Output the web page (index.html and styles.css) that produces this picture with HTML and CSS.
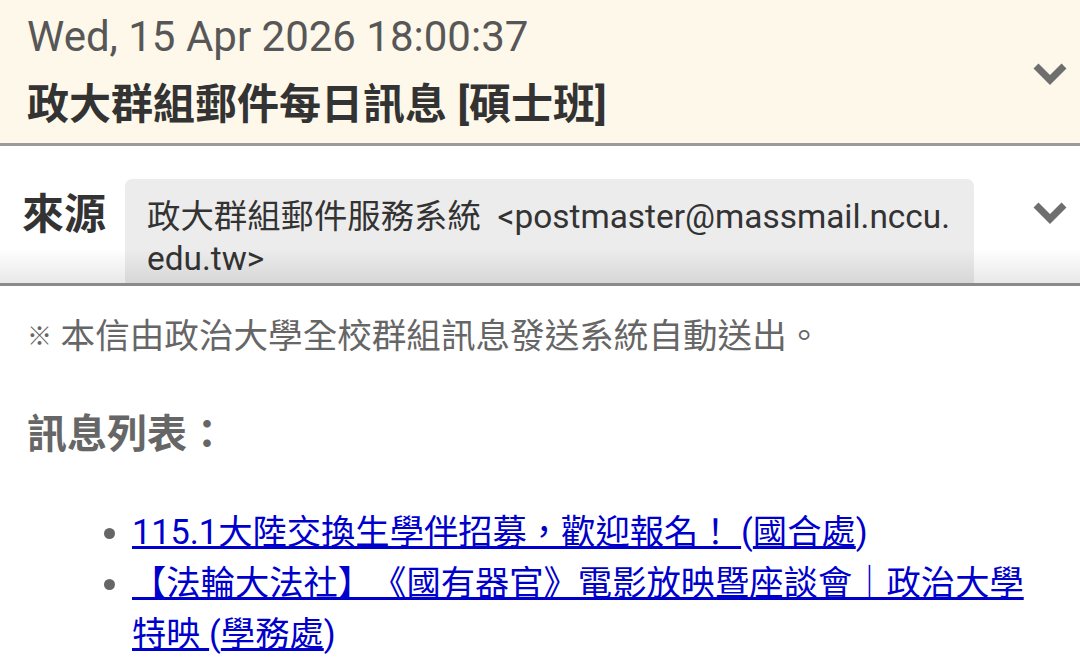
FILE: index.html
```html
<!DOCTYPE html>
<html lang="zh-Hant">
<head>
<meta charset="utf-8">
<title>政大群組郵件每日訊息</title>
<link rel="stylesheet" href="styles.css">
</head>
<body>
<header class="header">
  <div class="header-text">
    <div class="date">Wed, 15 Apr 2026 18:00:37</div>
    <div class="subject">政大群組郵件每日訊息 [碩士班]</div>
  </div>
  <svg class="chevron chevron-head" viewBox="0 0 34 23" width="34" height="23"><path d="M3 3 L17 17 L31 3" fill="none" stroke="#6e6e6e" stroke-width="7"/></svg>
</header>
<section class="from-row">
  <div class="from-label">來源</div>
  <div class="from-box">政大群組郵件服務系統&nbsp;&nbsp;&lt;postmaster@massmail.nccu.<wbr>edu.tw&gt;</div>
  <svg class="chevron chevron-from" viewBox="0 0 34 23" width="34" height="23"><path d="M3 3 L17 17 L31 3" fill="none" stroke="#6e6e6e" stroke-width="7"/></svg>
  <div class="fade"></div>
</section>
<main class="content">
  <p class="note"><span class="mark">※</span> 本信由政治大學全校群組訊息發送系統自動送出。</p>
  <h3 class="list-title">訊息列表：</h3>
  <ul class="msg-list">
    <li><a href="#">115.1大陸交換生學伴招募，歡迎報名！ </a><span class="dept">(<a href="#">國合處</a>)</span></li>
    <li><a href="#">【法輪大法社】《國有器官》電影放映暨座談會｜政治大學特映 </a><span class="dept">(<a href="#">學務處</a>)</span></li>
  </ul>
</main>
</body>
</html>
```
FILE: styles.css
```css
html, body {
  margin: 0;
  padding: 0;
  background: #ffffff;
}
body {
  font-family: Roboto, "Noto Sans CJK TC", sans-serif;
  color: #333333;
  width: 1080px;
  overflow: hidden;
  text-spacing-trim: space-all;
}
.header {
  background: #fef8ea;
  border-bottom: 3px solid #9b9b9b;
  height: 143px;
  display: flex;
  align-items: center;
  box-sizing: content-box;
}
.header-text {
  flex: 1;
  padding-left: 27px;
  align-self: flex-start;
}
.date {
  font-size: 42px;
  line-height: 50px;
  margin-top: 12px;
  color: #575757;
}
.subject {
  font-size: 42px;
  line-height: 56px;
  margin-top: 15px;
  font-weight: bold;
  color: #333333;
}
.chevron {
  flex: none;
  display: block;
}
.chevron-head {
  margin-right: 13px;
  margin-top: 6px;
}
.from-row {
  position: relative;
  display: flex;
  align-items: flex-start;
  padding-top: 33px;
  height: 104px;
  border-bottom: 3px solid #8a8a8a;
  overflow: hidden;
}
.from-label {
  width: 125px;
  box-sizing: border-box;
  padding-left: 22px;
  font-size: 42px;
  line-height: 50px;
  margin-top: 11px;
  font-weight: bold;
  color: #333333;
  flex: none;
}
.from-box {
  width: 849px;
  box-sizing: border-box;
  height: 108px;
  background: #ececec;
  border-radius: 7px;
  padding: 17px 12px 0 22px;
  font-size: 33.4px;
  line-height: 42px;
  color: #333333;
  flex: none;
}
.chevron-from {
  margin-left: 59px;
  margin-top: 23px;
}
.fade {
  position: absolute;
  left: 0;
  right: 0;
  bottom: 0;
  height: 34px;
  background: linear-gradient(to bottom, rgba(0,0,0,0), rgba(0,0,0,0.09));
  pointer-events: none;
}
.content {
  padding: 0 40px 0 27px;
  color: #666666;
}
.note {
  margin: 25px 0 0 0;
  font-size: 34.6px;
  line-height: 50px;
  color: #666666;
}
.mark {
  font-size: 25px;
  vertical-align: 3px;
}
.list-title {
  margin: 48px 0 0 0;
  font-size: 40px;
  line-height: 50px;
  font-weight: bold;
  color: #666666;
}
.msg-list {
  margin: 47px 0 0 0;
  padding-left: 105px;
  font-size: 34.3px;
  line-height: 51px;
  color: #666666;
}
.msg-list a {
  color: #0000cc;
  text-decoration: underline;
}
.dept {
  color: #0000cc;
}
```
